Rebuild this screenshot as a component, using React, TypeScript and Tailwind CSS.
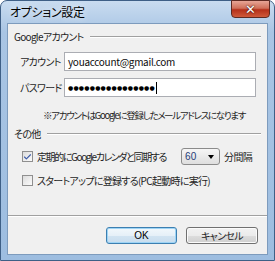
import { Check } from "lucide-react";

const jp = "font-['Noto_Sans_CJK_JP',sans-serif] [font-feature-settings:'palt']";
const t = "text-[10px] leading-none tracking-[-0.7px] text-[#1e1e1e] whitespace-nowrap";

function GroupHeader({ label }: { label: string }) {
  return (
    <div className="flex items-center gap-[6px] h-[14px]">
      <span className={t}>{label}</span>
      <div className="flex-1 flex flex-col">
        <div className="h-px bg-[#a0a0a0]" />
        <div className="h-px bg-white" />
      </div>
    </div>
  );
}

function Checkbox({ checked }: { checked: boolean }) {
  return (
    <div className="shrink-0 w-[11px] h-[11px] border border-[#8f8f8f] bg-gradient-to-br from-[#dcdcdc] to-[#fbfbfb] flex items-center justify-center">
      {checked && <Check className="w-[10px] h-[10px] text-[#3c5ba8]" strokeWidth={3} />}
    </div>
  );
}

export default function App() {
  return (
    <div className={`w-[275px] h-[261px] ${jp} rounded-t-[7px] border border-[#3e5f86] bg-[linear-gradient(180deg,#c9dcf0_0%,#a9c5e4_12%,#9dbde0_100%)] flex flex-col px-[6px] pb-[5px]`}>
      {/* Title bar */}
      <div className="h-[22px] flex items-start justify-between">
        <span className="pt-[3px] pl-[3px] text-[12px] leading-[16px] tracking-[-0.3px] text-black [text-shadow:0_0_6px_rgba(255,255,255,0.9)]">
          オプション設定
        </span>
        <div className="mr-[-2px] w-[39px] h-[18px] -mt-px rounded-b-[4px] border border-[#5e2a22] bg-[linear-gradient(180deg,#e7a596_0%,#d0705a_45%,#b5301a_55%,#cf5a3b_100%)] flex items-center justify-center">
          <span className="text-white text-[13px] font-bold leading-none font-['DejaVu_Sans',sans-serif] [text-shadow:0_0_1px_#4a1a12,0_0_2px_#4a1a12]">
            ✕
          </span>
        </div>
      </div>

      {/* Client area */}
      <div className="flex-1 bg-[#f0f0f0] border border-[#7d9bbd] flex flex-col">
        <div className="flex flex-col px-[6px] pt-[6px]">
          <GroupHeader label="Googleアカウント" />

          <div className="mt-[8px] flex items-center pl-[6px] pr-[5px]">
            <span className={`w-[44px] ${t}`}>アカウント</span>
            <div className="flex-1 h-[19px] bg-white border border-[#abadb3] flex items-center px-[3px]">
              <span className="text-[10px] leading-none tracking-[-0.3px] text-[#0c0c0c]">youaccount@gmail.com</span>
            </div>
          </div>

          <div className="mt-[7px] flex items-center pl-[6px] pr-[5px]">
            <span className={`w-[44px] ${t}`}>パスワード</span>
            <div className="flex-1 h-[19px] bg-white border border-[#abadb3] flex items-center px-[3px]">
              <span className="text-[6px] leading-none tracking-[0.2px] text-black font-['DejaVu_Sans',sans-serif]">
                ●●●●●●●●●●●●●●●●
              </span>
              <div className="ml-[1px] w-px h-[12px] bg-black" />
            </div>
          </div>

          <div className="mt-[11px] pl-[29px] text-[9.5px] leading-[14px] tracking-[-1.3px] text-[#1e1e1e] whitespace-nowrap">
            ※アカウントはGoogleに登録したメールアドレスになります
          </div>

          <div className="mt-[5px]">
            <GroupHeader label="その他" />
          </div>

          <div className="mt-[7px] flex items-center pl-[8px] h-[17px]">
            <Checkbox checked />
            <span className="ml-[4px] text-[10px] leading-none tracking-[-1.4px] text-[#1e1e1e] whitespace-nowrap">
              定期的にGoogleカレンダと同期する
            </span>
            <div className="ml-auto shrink-0 w-[39px] h-[17px] rounded-[3px] border border-[#8b8b8b] bg-[linear-gradient(180deg,#f6f6f6,#dedede)] flex items-center justify-between pl-[3px] pr-[5px]">
              <span className="text-[10px] leading-none text-[#1f3c78] font-['Liberation_Sans',sans-serif]">60</span>
              <span className="w-0 h-0 border-l-[3px] border-r-[3px] border-t-[4px] border-l-transparent border-r-transparent border-t-black" />
            </div>
            <span className={`ml-[4px] mr-[9px] ${t}`}>分間隔</span>
          </div>

          <div className="mt-[9px] flex items-center pl-[8px] h-[13px]">
            <Checkbox checked={false} />
            <span className={`ml-[4px] ${t}`}>スタートアップに登録する(PC起動時に実行)</span>
          </div>
        </div>

        <div className="flex-1" />

        {/* Footer */}
        <div className="flex flex-col">
          <div className="h-px bg-[#a0a0a0]" />
          <div className="h-px bg-white" />
        </div>
        <div className="flex justify-end gap-[9px] pt-[10px] pb-[10px] pr-[9px]">
          <button className="w-[71px] h-[17px] rounded-[3px] border border-[#3c7fb1] bg-[linear-gradient(180deg,#f2f8fc_0%,#e6f0f8_50%,#d2e4f2_51%,#c8ddee_100%)] shadow-[inset_0_0_0_1px_#9ed4f5] flex items-center justify-center">
            <span className="text-[10px] leading-none text-black font-['Liberation_Sans',sans-serif]">OK</span>
          </button>
          <button className="w-[72px] h-[17px] rounded-[3px] border border-[#707070] bg-[linear-gradient(180deg,#f2f2f2_0%,#ebebeb_50%,#dddddd_51%,#cfcfcf_100%)] shadow-[inset_0_0_0_1px_#fbfbfb] flex items-center justify-center">
            <span className={t}>キャンセル</span>
          </button>
        </div>
      </div>
    </div>
  );
}
